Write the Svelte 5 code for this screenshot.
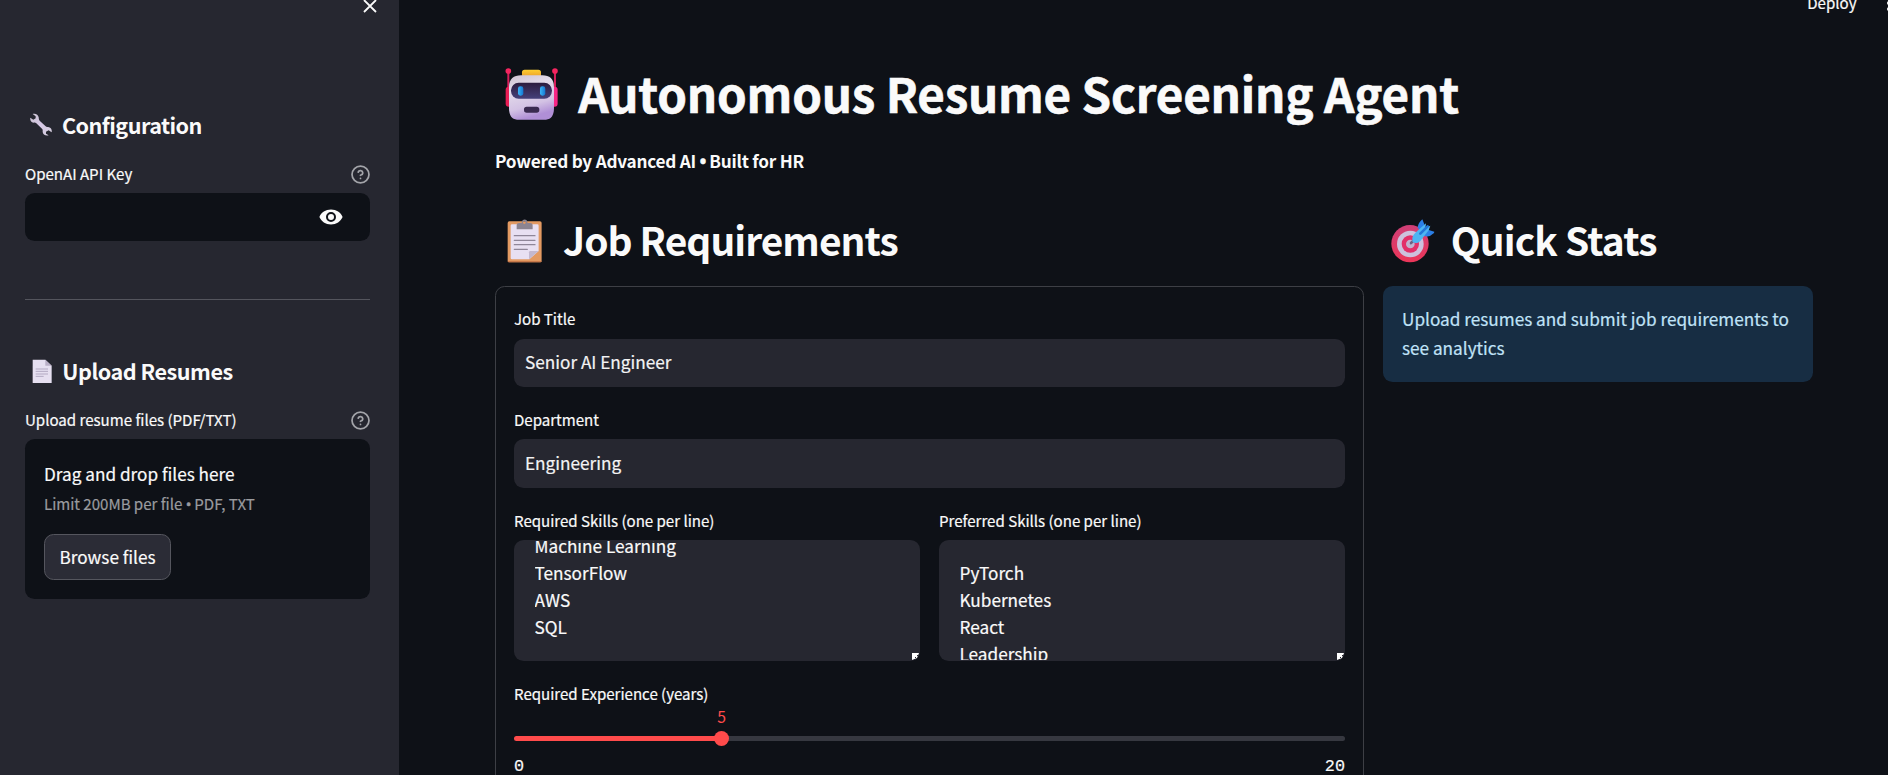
<script>
  const required = ['Machine Learning', 'TensorFlow', 'AWS', 'SQL'];
  const preferred = ['', 'PyTorch', 'Kubernetes', 'React', 'Leadership'];
  const experience = 5;
  const maxExperience = 20;
</script>

{#snippet help()}
  <svg class="help" viewBox="0 0 24 24" fill="none" stroke="currentColor" stroke-width="2.2" stroke-linecap="round" stroke-linejoin="round">
    <circle cx="12" cy="12" r="10.7" /><path d="M9.1 9a3 3 0 0 1 5.8 1c0 2-3 3-3 3M12 17h.01" />
  </svg>
{/snippet}

{#snippet grip()}
  <svg class="grip" viewBox="0 0 7 7"><path d="M0 0h7L5 5 0 7z" fill="#fff" /><path d="M3 5l1-1M5 3l1-1M2 6.500h2" stroke="#262730" stroke-width="1" /></svg>
{/snippet}

<div class="app">
  <aside>
    <div class="top">
      <svg class="close" viewBox="0 0 14 14"><path d="M1 1l12 12M13 1L1 13" stroke="#fafafa" stroke-width="1.8" /></svg>
    </div>
    <h3>
      <svg class="wrench" viewBox="91 340 67 70">
        <defs><linearGradient id="steel" x1="0" y1="0" x2="1" y2="1"><stop offset="0" stop-color="#c9c3cf" /><stop offset=".5" stop-color="#d6c8e6" /><stop offset="1" stop-color="#d4cedb" /></linearGradient></defs>
        <path fill="url(#steel)" d="M99 343c8-3 17 2 18 10 1 4 0 7 3 10l18 17c3 3 6 2 10 3 6 1 10 8 8 15l-9-6-8 4v6l8 5c-9 3-18-3-18-11 0-4 1-6-2-9l-17-16c-3-3-5-2-9-2-6 0-11-7-9-15l9 6 7-4 0-6z" />
      </svg>
      <span>Configuration</span>
    </h3>
    <div class="label"><span>OpenAI API Key</span>{@render help()}</div>
    <div class="key">
      <svg viewBox="0 0 24 16"><path fill="#fafafa" fill-rule="evenodd" d="M12 .6C6.600.6 2.300 3.500.400 8c1.900 4.500 6.200 7.400 11.600 7.400s9.700-2.900 11.600-7.400C21.700 3.500 17.400.6 12 .6zM12 3a5 5 0 1 1 0 10 5 5 0 0 1 0-10zm0 2a3 3 0 1 0 0 6 3 3 0 0 0 0-6z" /></svg>
    </div>
    <hr />
    <h3 class="upload">
      <svg class="page" viewBox="94 56 60 74">
        <path fill="#e6dff0" d="M96 58h38l19 18v53H96z" /><path fill="#b9afc6" d="M134 58l19 18h-19z" />
        <path stroke="#b3a9c2" stroke-width="3" d="M105 86h37M105 93h37M105 101h37M105 108h24" />
      </svg>
      <span>Upload Resumes</span>
    </h3>
    <div class="label"><span>Upload resume files (PDF/TXT)</span>{@render help()}</div>
    <div class="drop">
      <p>Drag and drop files here</p>
      <small>Limit 200MB per file <i>•</i> PDF, TXT</small>
      <button>Browse files</button>
    </div>
  </aside>

  <main>
    <div class="toolbar"><span>Deploy</span><svg viewBox="0 0 4 18"><g fill="#fafafa"><circle cx="2" cy="3" r="2" /><circle cx="2" cy="9" r="2" /><circle cx="2" cy="15" r="2" /></g></svg></div>
    <h1>
      <svg class="robot" viewBox="75 52 160 160">
        <defs>
          <linearGradient id="head" x1="0" y1="0" x2=".3" y2="1"><stop offset="0" stop-color="#cfc4d2" /><stop offset=".35" stop-color="#e3dbea" /><stop offset=".75" stop-color="#d3c2e4" /><stop offset="1" stop-color="#b08fd6" /></linearGradient>
          <linearGradient id="visor" x1="0" y1="0" x2="0" y2="1"><stop offset="0" stop-color="#2c1c3e" /><stop offset="1" stop-color="#45407a" /></linearGradient>
          <linearGradient id="gold" x1="0" y1="0" x2="0" y2="1"><stop offset="0" stop-color="#ffcf30" /><stop offset="1" stop-color="#e99a2c" /></linearGradient>
          <linearGradient id="eye" x1="0" y1="0" x2="1" y2="0"><stop offset="0" stop-color="#3cb4f6" /><stop offset="1" stop-color="#1478d4" /></linearGradient>
        </defs>
        <path d="M85 66v50M225 66v50" stroke="#d81e5b" stroke-width="6" />
        <circle cx="85" cy="64" r="8.500" fill="#f4255f" /><circle cx="225" cy="64" r="8.500" fill="#f4255f" />
        <rect x="77" y="111" width="20" height="60" rx="9" fill="#e81d55" /><rect x="213" y="111" width="20" height="60" rx="9" fill="#f72585" />
        <rect x="126" y="60" width="57" height="24" rx="8" fill="url(#gold)" />
        <path fill="url(#head)" d="M87 112c0-24 14-35 36-35h64c22 0 35 11 35 35v64c0 20-8 34-24 34h-87c-16 0-24-14-24-34z" />
        <rect x="93" y="99" width="123" height="48" rx="23" fill="url(#visor)" />
        <rect x="114" y="110" width="16" height="28" rx="7" fill="url(#eye)" /><rect x="180" y="110" width="16" height="28" rx="7" fill="url(#eye)" />
        <rect x="132" y="171" width="46" height="18" rx="8" fill="#3a2a50" />
      </svg>
      <span>Autonomous Resume Screening Agent</span>
    </h1>
    <p class="tagline">Powered by Advanced AI <i>•</i> Built for HR</p>

    <div class="columns">
      <section class="job">
        <h2>
          <svg class="clipboard" viewBox="82 506 106 132">
            <rect x="84" y="513" width="102" height="123" rx="5" fill="#e39a62" /><path fill="#c9794a" d="M84 632h102v1a3 3 0 0 1-3 3H87a3 3 0 0 1-3-3z" />
            <path fill="#e8e0f2" d="M97 522h76a4 4 0 0 1 4 4v76l-28 25H97a4 4 0 0 1-4-4v-97a4 4 0 0 1 4-4z" /><path fill="#c3b8cf" d="M148 627v-21q0-4 4-4h25z" />
            <path fill="#8c8491" fill-rule="evenodd" d="M111 537v-12q0-7 8-7h5c2 0 3-2 3-4 2-9 14-9 16 0 0 2 1 4 3 4h5q8 0 8 7v12zM134 513a4 4 0 1 0 .1 0z" />
            <path stroke="#8f8699" stroke-width="4" stroke-linecap="round" d="M104 556h62M104 570h62M104 583h62M104 597h39" />
          </svg>
          <span>Job Requirements</span>
        </h2>
        <form>
          <div class="field"><div class="label"><span>Job Title</span></div><div class="input">Senior AI Engineer</div></div>
          <div class="field"><div class="label"><span>Department</span></div><div class="input department">Engineering</div></div>
          <div class="pair">
            <div class="field">
              <div class="label"><span>Required Skills (one per line)</span></div>
              <div class="area"><div class="lines">{#each required as s}<div>{s}</div>{/each}</div>{@render grip()}</div>
            </div>
            <div class="field">
              <div class="label"><span>Preferred Skills (one per line)</span></div>
              <div class="area"><div class="lines">{#each preferred as s}<div>{s}</div>{/each}</div>{@render grip()}</div>
            </div>
          </div>
          <div class="field">
            <div class="label"><span>Required Experience (years)</span></div>
            <div class="slider" style="--value: {(experience / maxExperience) * 100}%">
              <div class="track"></div>
              <div class="thumb"><span>{experience}</span></div>
            </div>
            <div class="range"><span>0</span><span>{maxExperience}</span></div>
          </div>
        </form>
      </section>

      <section class="stats">
        <h2>
          <svg class="target" viewBox="1292 506 132 132">
            <defs><linearGradient id="ring" x1="0" y1="0" x2="0" y2="1"><stop offset="0" stop-color="#cf3f77" /><stop offset="1" stop-color="#ec3659" /></linearGradient></defs>
            <circle cx="1349" cy="580" r="56" fill="url(#ring)" /><circle cx="1350" cy="581" r="40" fill="#cdc1dd" /><circle cx="1350" cy="581" r="26" fill="#e22f69" /><circle cx="1350" cy="581" r="13" fill="#c0b2cf" />
            <path d="M1352 578l14-13" stroke="#6d6084" stroke-width="8" stroke-linecap="round" />
            <path fill="#2b7fe6" d="M1372 532q1-14 14-25l8 20-8 20zM1390 556q16 7 31-8l1-4-19-6z" />
            <path fill="#4db5f2" d="M1356 566c0-12 10-19 17-26l24-21-2 15 15-8-5 14-22 28c-7 9-17 14-26 7-1-2-1-5-1-9z" />
            <path stroke="#2476d8" stroke-width="8" stroke-linecap="round" d="M1380 550l22-22" />
          </svg>
          <span>Quick Stats</span>
        </h2>
        <div class="info">Upload resumes and submit job requirements to see analytics</div>
      </section>
    </div>
  </main>
</div>

<style>
  :global(body) { margin: 0; background: #0e1117; }
  .app { display: flex; height: 775px; overflow: hidden; background: #0e1117; color: #fafafa; font: 17.2px/28px "Noto Sans CJK SC", "Open Sans", sans-serif; -webkit-text-stroke: 0.2px; }
  .app, .app * { box-sizing: border-box; }
  h1, h2, h3, p, hr { margin: 0; }
  svg { display: block; flex: none; }
  i { font-family: "Open Sans", sans-serif; font-style: normal; line-height: 1; letter-spacing: -0.4px; -webkit-text-stroke: 0.6px; }

  aside { width: 399px; flex: none; padding: 0 29px 0 25px; background: #262730; }
  .top { height: 109px; display: flex; justify-content: flex-end; }
  .close { width: 14px; height: 14px; margin: -1px -7px 0 0; }
  h3 { display: flex; align-items: center; height: 32px; margin-bottom: 20px; font-size: 21.6px; line-height: 32px; font-weight: 700; letter-spacing: -0.53px; -webkit-text-stroke: 0; }
  h3.upload { letter-spacing: -0.48px; }
  .wrench { width: 22.3px; height: 23.300px; margin: 0 9.300px 0 5.300px; }
  .page { width: 20px; height: 24.700px; margin: 0 10.700px 0 6.600px; }
  .label { display: flex; justify-content: space-between; height: 32.400px; font-size: 15.1px; line-height: 24px; letter-spacing: -0.02px; }
  aside .label { height: 32px; }
  .help { width: 19px; height: 19px; margin: 4px 0 0; color: #a3a4a9; }
  .key { height: 48px; display: flex; align-items: center; justify-content: flex-end; padding-right: 27px; border-radius: 9.600px; background: #0e1117; }
  .key svg { width: 24px; height: 16px; }
  hr { height: 1px; margin: 58px 0 55px; border: 0; background: #54555d; }
  .drop { height: 160px; padding: 21px 19px; border-radius: 9.600px; background: #0e1117; }
  .drop small { display: block; height: 24px; margin-top: 3px; font-size: 15.1px; line-height: 24px; letter-spacing: -0.03px; color: #9a9b9f; }
  button { display: flex; align-items: center; justify-content: center; width: 127px; height: 46px; margin-top: 19px; padding: 0; font: inherit; color: inherit; background: #2b2c36; border: 1px solid #55565e; border-radius: 9.600px; }

  main { flex: 1; min-width: 0; padding-left: 96px; }
  .toolbar { display: flex; justify-content: flex-end; height: 60px; font-size: 15.1px; line-height: 24px; }
  .toolbar > span { margin: -10px 30px 0 0; }
  .toolbar svg { width: 4px; height: 18px; margin: -6px -2.500px 0 0; }
  h1 { display: flex; align-items: center; height: 64px; font-size: 47.5px; line-height: 64px; font-weight: 700; white-space: nowrap; letter-spacing: -0.2px; -webkit-text-stroke: 0.6px; }
  h1 span { padding-top: 2px; }
  .robot { width: 53.300px; height: 53.300px; margin: 4px 19.900px 0 10px; }
  .tagline { margin-top: 23px; font-weight: 700; letter-spacing: -0.24px; -webkit-text-stroke: 0; }
  .columns { display: grid; grid-template-columns: 869px 430px; gap: 19px; margin-top: 38px; }
  h2 { display: flex; align-items: center; height: 52px; margin-bottom: 21px; font-size: 38.9px; line-height: 52px; font-weight: 700; white-space: nowrap; letter-spacing: -0.94px; -webkit-text-stroke: 0; }
  .stats h2 { letter-spacing: -0.85px; }
  .clipboard { width: 35.300px; height: 44px; margin: 3px 20.400px 0 12.300px; }
  .target { width: 44px; height: 44px; margin: 3px 16px 0 7.700px; }
  form { height: 560px; padding: 19.200px 18px; border: 1px solid #3d3f45; border-radius: 9.600px; }
  .field { margin-bottom: 20px; }
  .input { height: 48.300px; padding: 0 11px; line-height: 46px; border-radius: 9.600px; background: #262730; color: #f3f3f4; }
  .input.department { line-height: 48px; }
  .pair { display: grid; grid-template-columns: 1fr 1fr; gap: 19px; }
  .area { position: relative; height: 121px; padding: 1px 20.500px; border-radius: 9.600px; background: #262730; }
  .lines { height: 119px; overflow: hidden; line-height: 27px; }
  .lines div { height: 27px; }
  .lines div:first-child { margin-top: -9px; }
  .grip { position: absolute; right: 1px; bottom: 1px; width: 7px; height: 7px; }
  .slider { position: relative; height: 51px; padding-top: 23px; }
  .track { height: 5px; border-radius: 3px; background: linear-gradient(to right, #ff4b4b var(--value), #363840 var(--value)); }
  .thumb { position: absolute; left: var(--value); top: 18px; width: 15px; height: 15px; margin-left: -7.500px; border-radius: 50%; background: #ff4b4b; display: flex; justify-content: center; }
  .thumb span { margin-top: -26.500px; height: 24px; line-height: 24px; font-size: 15.8px; color: #ff4b4b; -webkit-text-stroke: 0; }
  .range { display: flex; justify-content: space-between; margin-top: -9px; font: 16.8px/24px "Liberation Mono", monospace; }
  .info { height: 96px; padding: 18px 19px; border-radius: 9.600px; background: #172d43; color: #c0e3f8; line-height: 29px; }
</style>
